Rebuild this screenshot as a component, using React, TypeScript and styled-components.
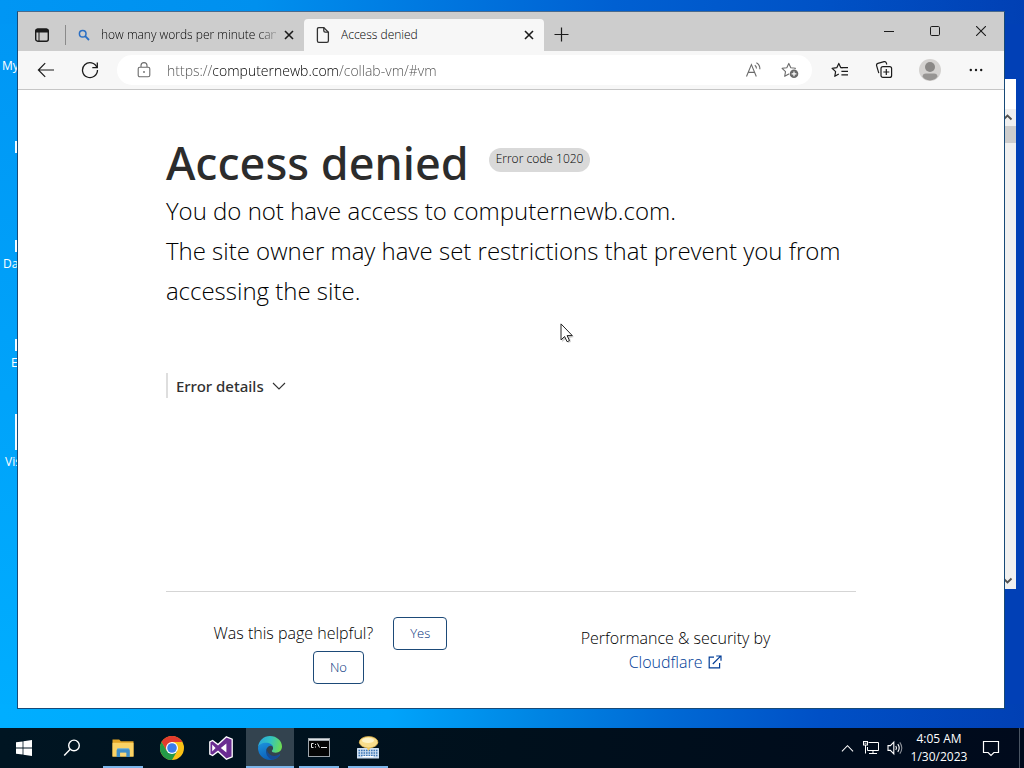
import React from 'react';
import styled, { createGlobalStyle, css } from 'styled-components';

const GlobalStyle = createGlobalStyle`
  * { box-sizing: border-box; }
  body {
    margin: 0;
    font-family: 'Open Sans', 'Noto Sans', sans-serif;
    color: #313131;
  }
  button, input { font: inherit; color: inherit; }
  svg { display: block; flex: none; }
`;

const Screen = styled.div`
  display: flex;
  flex-direction: column;
  min-height: 100vh;
`;

const Desktop = styled.main`
  position: relative;
  flex: 1;
  display: flex;
  overflow: hidden;
  padding: 11px 19px 19px 17px;
  background:
    linear-gradient(90deg, #00aeff 0%, #00a4fb 38%, #0086e4 52%, #0068d4 66%, #0050c6 80%, #0140b4 100%) bottom / 100% 24px no-repeat,
    linear-gradient(90deg, #0096f4 0%, #0090ee 25%, #0078e0 42%, #0060d2 60%, #0052c6 80%, #0140b4 100%) top / 100% 24px no-repeat,
    linear-gradient(90deg, transparent 60%, #0140b6 60%),
    linear-gradient(180deg, #0096f4, #00aeff);
`;

const Shortcuts = styled.div`
  position: absolute;
  top: 0;
  left: 0;
`;

const Shortcut = styled.div`
  display: flex;
  flex-direction: column;
  height: 99px;
  width: 24px;
`;

const ShortcutPicture = styled.div<{ $tall?: boolean; $shown: boolean }>`
  width: 8px;
  height: ${(p) => (p.$tall ? 36 : 12)}px;
  margin: ${(p) => (p.$tall ? 18 : 42)}px 0 3px 15px;
  background: ${(p) => (p.$shown ? '#f4fbff' : 'transparent')};
`;

const ShortcutLabel = styled.span<{ $start: number }>`
  padding-left: ${(p) => p.$start}px;
  font-size: 12px;
  line-height: 18px;
  color: #fff;
  white-space: nowrap;
`;

const BackWindow = styled.div`
  position: absolute;
  top: 79px;
  right: 8px;
  bottom: 139px;
  width: 40px;
  display: flex;
  flex-direction: column;
  align-items: flex-end;
  padding-top: 30px;
  background: #fff;
`;

const ScrollTrack = styled.div`
  flex: 1;
  width: 17px;
  display: flex;
  flex-direction: column;
  align-items: center;
  background: #f0f0f0;
  color: #505050;
`;

const ScrollThumb = styled.div`
  width: 17px;
  height: 17px;
  margin-bottom: auto;
  background: #cdcdcd;
`;

const Browser = styled.section`
  position: relative;
  flex: 1;
  display: flex;
  flex-direction: column;
  min-width: 0;
  border: 1px solid #174a78;
  border-top-color: #4a6a8c;
  background: #fff;
`;

const TabStrip = styled.div`
  display: flex;
  height: 39px;
  padding-top: 7px;
  background: #cdcdcd;
`;

const IconButton = styled.button<{ $w: number; $h: number; $tone?: string }>`
  display: flex;
  align-items: center;
  justify-content: center;
  flex: none;
  width: ${(p) => p.$w}px;
  height: ${(p) => p.$h}px;
  padding: 0;
  border: 0;
  background: none;
  color: ${(p) => p.$tone ?? '#1b1b1b'};
`;

const Divider = styled.div`
  width: 1px;
  height: 20px;
  margin: 6px 0;
  background: #8a8a8a;
`;

const Tab = styled.div<{ $active?: boolean }>`
  display: flex;
  align-items: center;
  flex: none;
  width: ${(p) => (p.$active ? 240 : 238)}px;
  height: 32px;
  padding: 0 4px 0 12px;
  border-radius: 4px 4px 0 0;
  background: ${(p) => (p.$active ? '#f7f7f7' : 'transparent')};
`;

const TabTitle = styled.span<{ $fade?: boolean }>`
  flex: 1;
  margin: 0 2px 0 11px;
  overflow: hidden;
  white-space: nowrap;
  font-size: 12px;
  font-weight: 300;
  line-height: 20px;
  color: #000;
  ${(p) =>
    p.$fade &&
    css`
      mask-image: linear-gradient(90deg, #000 90%, transparent 104%);
    `}
`;

const WindowControls = styled.div`
  display: flex;
  margin: -7px 0 0 auto;
`;

const Toolbar = styled.div`
  display: flex;
  align-items: center;
  height: 39px;
  padding: 0 2px 0 5px;
  border-bottom: 1px solid #c6c6c6;
  background: #f7f7f7;
`;

const AddressBar = styled.label`
  flex: 1;
  display: flex;
  align-items: center;
  min-width: 0;
  height: 30px;
  margin: 0 10px 0 5px;
  padding: 0 4px 0 9px;
  border-radius: 15px;
  background: #fff;
`;

const AddressInput = styled.input`
  flex: 1;
  min-width: 0;
  height: 24px;
  margin-left: 5px;
  padding: 0;
  border: 0;
  outline: 0;
  font-size: 14px;
  font-weight: 300;
  color: transparent;
  background: linear-gradient(90deg, #505050 46px, #000 46px, #000 172px, #505050 172px);
  -webkit-background-clip: text;
  background-clip: text;
`;

const Page = styled.article`
  flex: 1;
  display: flex;
  flex-direction: column;
  padding: 43px 15% 24px;
`;

const TitleRow = styled.header`
  display: flex;
  align-items: center;
  gap: 20px;
  margin-bottom: -2px;
`;

const Title = styled.h1`
  margin: 0;
  font-family: 'Noto Sans', 'Open Sans', sans-serif;
  font-size: 45px;
  line-height: 60px;
  font-weight: 500;
  color: #2c2c2c;
`;

const ErrorCode = styled.span`
  height: 24px;
  padding: 0 7px;
  margin-bottom: 6px;
  border-radius: 12px;
  background: #d9d9d9;
  font-size: 12px;
  font-weight: 300;
  line-height: 22px;
  color: #000;
`;

const Message = styled.p`
  margin: 0;
  font-size: 24px;
  font-weight: 300;
  line-height: 40px;
  color: #000;
`;

const Details = styled.button`
  display: flex;
  align-items: center;
  align-self: flex-start;
  gap: 8px;
  height: 25px;
  margin-top: 62px;
  padding: 0 8px;
  border: 0;
  border-left: 2px solid #dedede;
  background: none;
  font-family: 'Noto Sans', 'Open Sans', sans-serif;
  font-size: 15px;
  font-weight: 500;
`;

const Footer = styled.footer`
  display: grid;
  grid-template-columns: 1fr 1fr;
  align-items: center;
  margin-top: auto;
  padding-top: 25px;
  border-top: 1px solid #d5d5d5;
  font-size: 16px;
  font-weight: 300;
  line-height: 24px;
  color: #000;
`;

const Feedback = styled.div`
  display: flex;
  flex-wrap: wrap;
  align-items: center;
  justify-content: center;
  row-gap: 1px;
  padding: 0 16px;
`;

const Question = styled.span`
  margin-right: 4px;
  padding-bottom: 2px;
`;

const Answer = styled.button`
  height: 33px;
  margin: 0 16px;
  padding: 0 16px 2px;
  border: 1px solid #1d4a78;
  border-radius: 4px;
  background: #fff;
  font-size: 13px;
  font-weight: 300;
  color: #00307a;
`;

const Credit = styled.div`
  display: flex;
  flex-direction: column;
  align-items: center;
  padding: 0 16px 2px 0;
`;

const CreditLink = styled.a`
  display: flex;
  align-items: center;
  gap: 6px;
  color: #003c96;
  text-decoration: none;
`;

const Pointer = styled.div`
  position: absolute;
  top: 323px;
  left: 560px;
`;

const Taskbar = styled.nav`
  display: flex;
  height: 40px;
  background: linear-gradient(90deg, #001522, #00101c 50%, #000a1c);
`;

const TaskButton = styled.button<{ $open?: boolean; $active?: boolean; $lead?: boolean }>`
  display: flex;
  flex-direction: column;
  align-items: center;
  width: 48px;
  height: 40px;
  margin-left: ${(p) => (p.$lead ? 3 : 0)}px;
  margin-right: ${(p) => (p.$open === undefined ? 0 : 1)}px;
  padding: 8px 0 0;
  border: 0;
  background: ${(p) => (p.$active ? '#33434f' : 'transparent')};
  color: #fff;

  &::after {
    content: '';
    width: ${(p) => (p.$active ? 48 : 40)}px;
    height: 2px;
    margin-top: auto;
    background: ${(p) => (p.$open ? '#7cb5ea' : 'transparent')};
  }
`;

const Tray = styled.div`
  display: flex;
  align-items: center;
  margin-left: auto;
  color: #fff;
`;

const Clock = styled.time`
  width: 64px;
  text-align: center;
  font-size: 12px;
  line-height: 18px;
  color: #fff;
  white-space: nowrap;
`;

const ShowDesktop = styled.div`
  width: 5px;
  height: 40px;
  margin-left: 8px;
  border-left: 1px solid #4a5563;
`;

const line = { fill: 'none', stroke: 'currentColor' } as const;

const CloseIcon = () => (
  <svg width="10" height="10" viewBox="0 0 10 10" {...line} strokeWidth="1.6">
    <path d="M1 1l8 8M9 1l-8 8" />
  </svg>
);

const WorkspaceIcon = () => (
  <svg width="16" height="16" viewBox="0 0 16 16" {...line} strokeWidth="1.4">
    <rect x="1.7" y="2.2" width="12.6" height="12" rx="2" />
    <path d="M1.500 3.600Q1.500 1.500 3.700 1.500h8.600q2.200 0 2.200 2.100V5.400h-13z" fill="currentColor" stroke="none" />
    <path d="M5 5v9" strokeWidth="1" />
  </svg>
);

const SearchIcon = () => (
  <svg width="12" height="12" viewBox="0 0 12 12" fill="none" stroke="#2a6fc4" strokeWidth="1.5">
    <circle cx="4.7" cy="4.7" r="3.3" />
    <path d="M7.200 7.200L11 11" strokeWidth="1.8" />
  </svg>
);

const PageIcon = () => (
  <svg width="14" height="18" viewBox="0 0 14 18" {...line} strokeWidth="1.3">
    <path d="M2.800 1.600h5l4.600 4.600v8.600q0 1.600-1.600 1.600h-8q-1.400 0-1.400-1.600V3.200q0-1.600 1.400-1.600z" />
    <path d="M7.800 1.600v3.200q0 1.400 1.400 1.400h3.200" />
  </svg>
);

const PlusIcon = () => (
  <svg width="15" height="15" viewBox="0 0 15 15" {...line} strokeWidth="1.2">
    <path d="M7.500 0.500v14M0.500 7.500h14" />
  </svg>
);

const MinimizeIcon = () => (
  <svg width="10" height="10" viewBox="0 0 10 10" {...line}>
    <path d="M0 5.500h10" />
  </svg>
);

const MaximizeIcon = () => (
  <svg width="10" height="10" viewBox="0 0 10 10" {...line}>
    <rect x="0.5" y="0.5" width="9" height="9" rx="1.2" />
  </svg>
);

const CloseWindowIcon = () => (
  <svg width="10" height="10" viewBox="0 0 10 10" {...line} strokeWidth="1.1">
    <path d="M0 0l10 10M10 0L0 10" />
  </svg>
);

const BackIcon = () => (
  <svg width="18" height="16" viewBox="0 0 18 16" {...line} strokeWidth="1.2">
    <path d="M17 8H1.500M8.200 1.200L1.400 8l6.800 6.800" />
  </svg>
);

const ReloadIcon = () => (
  <svg width="18" height="18" viewBox="0 0 18 18" {...line} strokeWidth="1.3">
    <path d="M16 6.400A7.500 7.500 0 1 0 16.500 9" />
    <path d="M16.300 1.600v5h-5" />
  </svg>
);

const LockIcon = () => (
  <svg width="14" height="16" viewBox="0 0 14 16" {...line} strokeWidth="1.1">
    <rect x="1.2" y="5.2" width="11.6" height="9.6" rx="1.6" />
    <path d="M4 5V3.600a3 3 0 0 1 6 0V5" />
    <circle cx="7" cy="10" r="0.9" fill="currentColor" stroke="none" />
  </svg>
);

const ReadAloudIcon = () => (
  <svg width="18" height="16" viewBox="0 0 18 16" {...line} strokeWidth="1.1">
    <path d="M1.500 14.500L6.400 2.600 11.300 14.500M3.200 10.400h6.400" />
    <path d="M9.800 3.200q1.700 1.100 1.700 3.200M11.400 .8q3.600 2 3.500 6.400" />
  </svg>
);

const starPath = 'M7.800 1.400l2 4.300 4.600.6-3.400 3.300.8 4.700-4-2.300-4.100 2.300.8-4.700L1.100 6.300l4.700-.6z';

const AddFavoriteIcon = () => (
  <svg width="18" height="17" viewBox="0 0 18 17" {...line} strokeWidth="1.1">
    <path d={starPath} strokeLinejoin="round" />
    <circle cx="13" cy="11.8" r="5" fill="#fff" stroke="none" />
    <circle cx="13" cy="11.8" r="4.3" fill="currentColor" stroke="none" />
    <path d="M13 9.400v4.800M10.600 11.800h4.800" stroke="#fff" strokeWidth="1.2" />
  </svg>
);

const FavoritesIcon = () => (
  <svg width="18" height="16" viewBox="0 0 18 16" {...line} strokeWidth="1.2" strokeLinejoin="round">
    <path d="M11.600 5.700H9.800L7.800 1.400l-2 4.300-4.700.6 3.500 3.300-.8 4.700 4-2.400" />
    <path d="M10.400 5.700H17M10.400 9.300H17M10.400 12.900H17" />
  </svg>
);

const CollectionsIcon = () => (
  <svg width="18" height="18" viewBox="0 0 18 18" {...line} strokeWidth="1.2">
    <rect x="6" y="5.6" width="10.6" height="10.8" rx="2" />
    <path d="M11.300 8v6M8.300 11h6" />
    <path d="M3.800 12.200L1.600 4.600Q1.200 2.800 2.900 2.300l6.200-1.600q1.700-.4 2.200 1.200l.5 1.600" />
  </svg>
);

const ProfileIcon = () => (
  <svg width="22" height="22" viewBox="0 0 22 22">
    <defs>
      <clipPath id="avatar">
        <circle cx="11" cy="11" r="11" />
      </clipPath>
    </defs>
    <g clipPath="url(#avatar)">
      <rect width="22" height="22" fill="#d4d2d0" />
      <circle cx="11" cy="8" r="5" fill="#8a8886" />
      <path d="M3.600 17.600Q3.600 14.400 7 14.400h8q3.400 0 3.400 3.200Q16.500 21.400 11 21.400t-7.400-3.800z" fill="#979593" />
    </g>
  </svg>
);

const MoreIcon = () => (
  <svg width="14" height="4" viewBox="0 0 14 4" fill="currentColor">
    <circle cx="1.8" cy="2" r="1.2" />
    <circle cx="7" cy="2" r="1.2" />
    <circle cx="12.2" cy="2" r="1.2" />
  </svg>
);

const ChevronIcon = ({ up, size = 14 }: { up?: boolean; size?: number }) => (
  <svg width={size} height={size} viewBox="0 0 14 14" {...line} strokeWidth="1.1">
    <path d={up ? 'M1 10l6-6 6 6' : 'M1 4l6 6 6-6'} />
  </svg>
);

const ScrollArrow = ({ up }: { up?: boolean }) => (
  <svg width="17" height="17" viewBox="0 0 17 17" {...line} strokeWidth="1.8">
    <path d={up ? 'M4.500 10.500l4-4 4 4' : 'M4.500 6.500l4 4 4-4'} />
  </svg>
);

const ExternalIcon = () => (
  <svg width="14" height="14" viewBox="0 0 14 14" {...line} strokeWidth="1.2">
    <path d="M6 2.200H1.200v10.600h10.400V8" />
    <path d="M4.800 9L12.600 1.200M8.200 1h4.800v4.800" />
  </svg>
);

const PointerIcon = () => (
  <svg width="14" height="20" viewBox="0 0 14 20">
    <path d="M2 3v16l4-3 2 4 3-1-1-4 4-1z" fill="#000" opacity="0.18" />
    <path d="M1 .9v16l3.600-3.400 2.500 5.200 2.400-1.100-2.400-5h5.200z" fill="#fff" stroke="#222" />
  </svg>
);

const WindowsIcon = () => (
  <svg width="16" height="24" viewBox="0 0 16 24" fill="#fff">
    <path d="M0 6.300l6.600-.9v6.200H0zM7.400 5.300L16 4v7.600H7.400zM0 12.400h6.600v6.200L0 17.700zM7.400 12.400H16V20l-8.600-1.200z" />
  </svg>
);

const TaskSearchIcon = () => (
  <svg width="18" height="24" viewBox="0 0 18 24" {...line} strokeWidth="1.4">
    <circle cx="11" cy="9.4" r="5.3" />
    <path d="M7.200 13.200L1.200 19.400" />
  </svg>
);

const ExplorerIcon = () => (
  <svg width="24" height="24" viewBox="0 0 24 24">
    <path d="M1.500 3.600h6.700l1.600 1.600h12.700v15.200h-21z" fill="#e3a526" />
    <path d="M1.500 6.800h21v13.800h-21z" fill="#fbd365" />
    <path d="M5.600 21v-6.400q0-1.800 1.800-1.800h9.600q1.800 0 1.800 1.800V21h-3.600v-4.200H9.200V21z" fill="#3e8ec9" />
    <path d="M9.200 16.800h6V20h-6z" fill="#f7d679" />
    <path d="M6.200 12.800h12" stroke="#6fb2de" />
  </svg>
);

const ChromeIcon = () => (
  <svg width="24" height="24" viewBox="0 0 24 24">
    <circle cx="12" cy="12" r="12" fill="#fbc116" />
    <path d="M12 6h10.400A12 12 0 0 0 1.600 6l5.200 9z" fill="#e33b2e" />
    <path d="M1.600 6A12 12 0 0 0 12 24l5.200-9H6.800z" fill="#249a48" />
    <circle cx="12" cy="12" r="6" fill="#fff" />
    <circle cx="12" cy="12" r="4.8" fill="#3b7ded" />
  </svg>
);

const VisualStudioIcon = () => (
  <svg width="24" height="24" viewBox="0 0 24 24">
    <path
      d="M17.400.8l5.800 2.400v17.600l-5.800 2.400L9 15.400 3.600 19.600.8 18.200V5.800l2.800-1.400L9 8.600z"
      fill="#6a2c91"
      stroke="#fff"
      strokeWidth="1.3"
    />
    <path d="M3.200 8.600v6.800L6.600 12zM17.400 7.600v8.800L11.800 12z" fill="#fff" />
  </svg>
);

const EdgeIcon = () => (
  <svg width="24" height="24" viewBox="0 0 24 24">
    <defs>
      <linearGradient id="wave" x1="0" y1="0.3" x2="1" y2="0.5">
        <stop offset="0" stopColor="#2aa5dc" />
        <stop offset="0.5" stopColor="#32c3c0" />
        <stop offset="1" stopColor="#6ddc52" />
      </linearGradient>
      <linearGradient id="body" x1="0" y1="0" x2="0.5" y2="1">
        <stop offset="0" stopColor="#1c93dd" />
        <stop offset="1" stopColor="#0b5cb5" />
      </linearGradient>
    </defs>
    <path d="M0 11.400A12 12 0 0 1 12 0c7 0 12 5 12 10.600 0 3.800-2.900 6.200-6.200 6.200-2.400 0-4-.8-4-1.700 0-.7 1.300-1.300 1.300-3.100 0-2.400-2.300-4.600-6.600-4.600C4.300 7.400 1 9 0 11.400z" fill="url(#wave)" />
    <path d="M0 12C.6 8.800 4 6.800 8 6.800c3.900 0 6.600 2 7 4.300-.8-1-2-1.500-3-1.300-2.600.8-4.200 3.200-3.700 6 .6 3.200 3.900 5.700 7.600 5.200 2.400-.4 4.300-1.500 5.400-2.600q1-.4.700.7C19.800 22.300 16.400 24 12.200 24A12 12 0 0 1 0 12z" fill="url(#body)" />
    <path d="M8.600 12.800c-1.600 4.900 1 9.300 5.600 11q4.800-.7 7.700-4.600.4-1.200-.8-.6c-5.500 3.200-11.600.6-12.500-5.800z" fill="#174b94" />
  </svg>
);

const TerminalIcon = () => (
  <svg width="24" height="24" viewBox="0 0 24 24">
    <rect x="1" y="2" width="22" height="19" fill="#9fa6ac" />
    <rect x="2" y="5" width="20" height="15" fill="#050505" />
    <path d="M2 3.500h20" stroke="#dfe3e6" />
    <path d="M6.500 7.500h-2v4h2M8.500 8v1M8.500 10.500v1M10.500 7.500l2 4M14 11.500h6" fill="none" stroke="#e8e8e8" />
  </svg>
);

const KeyboardIcon = () => (
  <svg width="24" height="24" viewBox="0 0 24 24">
    <rect x="1" y="12" width="22" height="10.6" rx="0.6" fill="#cfe0f2" />
    <path d="M2.500 14.500h19M2.500 17h19M2.500 19.500h19" stroke="#3d75b4" strokeWidth="1.3" strokeDasharray="1.6 0.9" />
    <path d="M6.500 20.600h11" stroke="#fff" strokeWidth="1.2" />
    <path d="M10 10.500h5.500L12.400 15z" fill="#f3cf6b" />
    <ellipse cx="12.6" cy="6.2" rx="9.3" ry="5.7" fill="#f8dd8c" stroke="#e5b84a" strokeWidth="0.7" />
    <ellipse cx="12" cy="4.4" rx="6" ry="2.6" fill="#fdf3c8" />
  </svg>
);

const NetworkIcon = () => (
  <svg width="16" height="16" viewBox="0 0 16 16" {...line}>
    <path d="M5.500 2.500h10v8h-11V7M10 10.500v3M6 13.500h8" />
    <rect x="0.5" y="1.5" width="4" height="3.5" />
    <path d="M2.500 5v8.500M1.500 3.200h2" />
  </svg>
);

const VolumeIcon = () => (
  <svg width="16" height="16" viewBox="0 0 16 16" {...line} strokeWidth="1.1">
    <path d="M1 5.600h2.400L6.800 2.200v11.600L3.400 10.400H1z" />
    <path d="M8.800 6q1.400 2 0 4M10.800 4.200q2.800 3.800 0 7.600" />
    <path d="M12.800 2.400q4 5.600 0 11.200" opacity="0.55" />
  </svg>
);

const NotificationIcon = () => (
  <svg width="18" height="18" viewBox="0 0 18 18" {...line} strokeWidth="1.2">
    <path d="M1.500 2.500h15v11h-4.600L9 16.400l-2.900-2.900H1.500z" />
  </svg>
);

const shortcuts = [
  { label: 'My', start: 2, shown: false },
  { label: '', start: 0, shown: true },
  { label: 'Da', start: 3, shown: true },
  { label: 'E', start: 11, shown: true },
  { label: 'Vis', start: 5, shown: true, tall: true },
];

const apps = [
  { name: 'File Explorer', Icon: ExplorerIcon, open: true },
  { name: 'Google Chrome', Icon: ChromeIcon, open: false },
  { name: 'Visual Studio', Icon: VisualStudioIcon, open: false },
  { name: 'Microsoft Edge', Icon: EdgeIcon, open: true, active: true },
  { name: 'Command Prompt', Icon: TerminalIcon, open: true },
  { name: 'On-Screen Keyboard', Icon: KeyboardIcon, open: true },
];

export default function App() {
  return (
    <Screen>
      <GlobalStyle />
      <Desktop>
        <Shortcuts>
          {shortcuts.map((s, i) => (
            <Shortcut key={i}>
              <ShortcutPicture $shown={s.shown} $tall={s.tall} />
              <ShortcutLabel $start={s.start}>{s.label}</ShortcutLabel>
            </Shortcut>
          ))}
        </Shortcuts>

        <BackWindow>
          <ScrollTrack>
            <ScrollArrow up />
            <ScrollThumb />
            <ScrollArrow />
          </ScrollTrack>
        </BackWindow>

        <Browser>
          <TabStrip>
            <IconButton $w={47} $h={32} aria-label="Tab actions"><WorkspaceIcon /></IconButton>
            <Divider />
            <Tab>
              <SearchIcon />
              <TabTitle $fade>how many words per minute can</TabTitle>
              <IconButton $w={22} $h={22} aria-label="Close tab"><CloseIcon /></IconButton>
            </Tab>
            <Tab $active>
              <PageIcon />
              <TabTitle>Access denied</TabTitle>
              <IconButton $w={22} $h={22} aria-label="Close tab"><CloseIcon /></IconButton>
            </Tab>
            <IconButton $w={35} $h={31} aria-label="New tab"><PlusIcon /></IconButton>
            <WindowControls>
              <IconButton $w={46} $h={38} aria-label="Minimize"><MinimizeIcon /></IconButton>
              <IconButton $w={46} $h={38} aria-label="Maximize"><MaximizeIcon /></IconButton>
              <IconButton $w={46} $h={38} aria-label="Close window"><CloseWindowIcon /></IconButton>
            </WindowControls>
          </TabStrip>

          <Toolbar>
            <IconButton $w={45} $h={30} aria-label="Back"><BackIcon /></IconButton>
            <IconButton $w={44} $h={30} aria-label="Reload"><ReloadIcon /></IconButton>
            <AddressBar>
              <IconButton $w={36} $h={28} $tone="#6b6b6b" aria-label="Site information"><LockIcon /></IconButton>
              <AddressInput aria-label="Address" defaultValue="https://computernewb.com/collab-vm/#vm" />
              <IconButton $w={36} $h={28} $tone="#6b6b6b" aria-label="Read aloud"><ReadAloudIcon /></IconButton>
              <IconButton $w={36} $h={28} $tone="#6b6b6b" aria-label="Add to favorites"><AddFavoriteIcon /></IconButton>
            </AddressBar>
            <IconButton $w={36} $h={30} aria-label="Favorites"><FavoritesIcon /></IconButton>
            <IconButton $w={52} $h={30} aria-label="Collections"><CollectionsIcon /></IconButton>
            <IconButton $w={40} $h={30} aria-label="Profile"><ProfileIcon /></IconButton>
            <IconButton $w={52} $h={30} aria-label="Settings and more"><MoreIcon /></IconButton>
          </Toolbar>

          <Page>
            <TitleRow>
              <Title>Access denied</Title>
              <ErrorCode>Error code 1020</ErrorCode>
            </TitleRow>
            <Message>You do not have access to computernewb.com.</Message>
            <Message>The site owner may have set restrictions that prevent you from accessing the site.</Message>
            <Details>
              Error details
              <ChevronIcon />
            </Details>
            <Footer>
              <Feedback>
                <Question>Was this page helpful?</Question>
                <Answer>Yes</Answer>
                <Answer>No</Answer>
              </Feedback>
              <Credit>
                <span>Performance &amp; security by</span>
                <CreditLink href="#cloudflare">
                  Cloudflare
                  <ExternalIcon />
                </CreditLink>
              </Credit>
            </Footer>
          </Page>
        </Browser>

        <Pointer><PointerIcon /></Pointer>
      </Desktop>

      <Taskbar>
        <TaskButton aria-label="Start"><WindowsIcon /></TaskButton>
        <TaskButton aria-label="Search"><TaskSearchIcon /></TaskButton>
        {apps.map(({ name, Icon, open, active }, i) => (
          <TaskButton key={name} aria-label={name} $open={open} $active={active} $lead={i === 0}>
            <Icon />
          </TaskButton>
        ))}
        <Tray>
          <IconButton $w={24} $h={40} $tone="#fff" aria-label="Show hidden icons"><ChevronIcon up size={13} /></IconButton>
          <IconButton $w={24} $h={40} $tone="#fff" aria-label="Network"><NetworkIcon /></IconButton>
          <IconButton $w={24} $h={40} $tone="#fff" aria-label="Volume"><VolumeIcon /></IconButton>
          <Clock>
            4:05 AM
            <br />
            1/30/2023
          </Clock>
          <IconButton $w={40} $h={40} $tone="#fff" aria-label="Notifications"><NotificationIcon /></IconButton>
          <ShowDesktop />
        </Tray>
      </Taskbar>
    </Screen>
  );
}
